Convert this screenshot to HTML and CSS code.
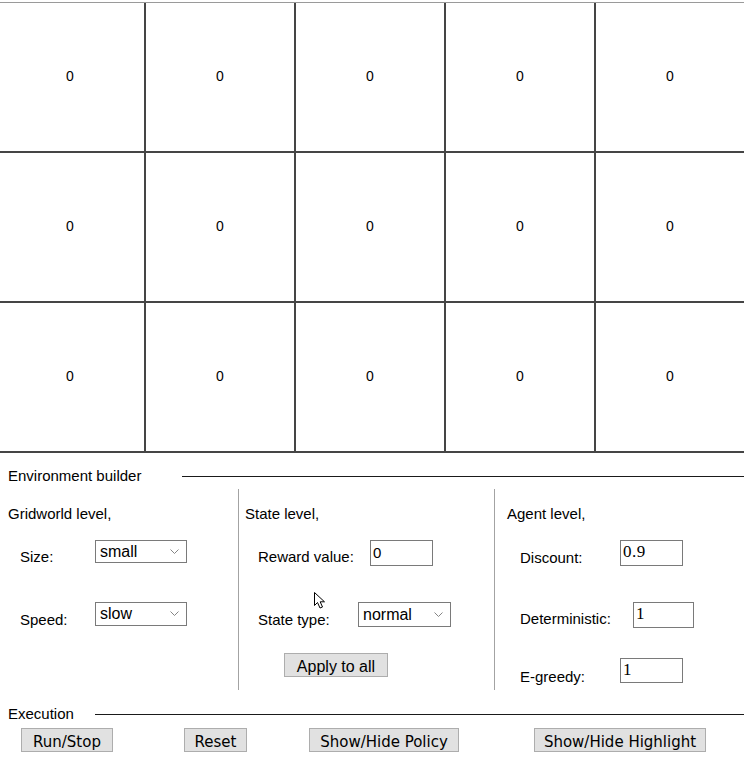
FILE: index.html
```html
<!DOCTYPE html>
<html>
<head>
<meta charset="utf-8">
<link rel="stylesheet" href="styles.css">
</head>
<body>
<div class="world">
  <div class="grid">
    <div class="cell">0</div><div class="cell">0</div><div class="cell">0</div><div class="cell">0</div><div class="cell">0</div>
    <div class="cell">0</div><div class="cell">0</div><div class="cell">0</div><div class="cell">0</div><div class="cell">0</div>
    <div class="cell">0</div><div class="cell">0</div><div class="cell">0</div><div class="cell">0</div><div class="cell">0</div>
  </div>
</div>

<div class="section-head env-head">
  <span class="section-title">Environment builder</span>
  <span class="rule rule-env"></span>
</div>

<div class="builder">
  <div class="col col-grid">
    <div class="col-title">Gridworld level,</div>
    <div class="row r1 h23">
      <label class="lbl w75 mt8">Size:</label>
      <span class="sel w92 h23"><span class="sel-text">small</span><svg class="chev" width="9" height="5" viewBox="0 0 9 5"><path d="M0.5 0.5 L4.5 4.5 L8.5 0.5" fill="none" stroke="#858585" stroke-width="1"/></svg></span>
    </div>
    <div class="row r2-grid h24">
      <label class="lbl w75 mt9">Speed:</label>
      <span class="sel w92 h24"><span class="sel-text">slow</span><svg class="chev" width="9" height="5" viewBox="0 0 9 5"><path d="M0.5 0.5 L4.5 4.5 L8.5 0.5" fill="none" stroke="#858585" stroke-width="1"/></svg></span>
    </div>
  </div>

  <div class="col col-state">
    <div class="col-title">State level,</div>
    <div class="row r1 h26">
      <label class="lbl w112 mt8">Reward value:</label>
      <span class="inp w63 h26 sans">0</span>
    </div>
    <div class="row r2 h25">
      <label class="lbl w100 mt9">State type:</label>
      <span class="sel w93 h25"><span class="sel-text">normal</span><svg class="chev" width="9" height="5" viewBox="0 0 9 5"><path d="M0.5 0.5 L4.5 4.5 L8.5 0.5" fill="none" stroke="#858585" stroke-width="1"/></svg></span>
    </div>
    <button class="btn apply">Apply to all</button>
  </div>

  <div class="col col-agent">
    <div class="col-title">Agent level,</div>
    <div class="row r1 h26">
      <label class="lbl w100 mt9">Discount:</label>
      <span class="inp w63 h26 serif">0.9</span>
    </div>
    <div class="row r2 h26">
      <label class="lbl w113 mt8">Deterministic:</label>
      <span class="inp w61 h26 serif">1</span>
    </div>
    <div class="row r3 h25">
      <label class="lbl w100 mt10">E-greedy:</label>
      <span class="inp w63 h25 serif">1</span>
    </div>
  </div>
</div>

<div class="section-head exec-head">
  <span class="section-title">Execution</span>
  <span class="rule rule-exec"></span>
</div>

<div class="exec">
  <button class="btn b-run">Run/Stop</button>
  <button class="btn b-reset">Reset</button>
  <button class="btn b-policy">Show/Hide Policy</button>
  <button class="btn b-high">Show/Hide Highlight</button>
</div>

<svg class="cursor" width="14" height="20" viewBox="0 0 14 20">
  <path d="M1.5 1.5 L1.5 14.5 L4.5 11.5 L7 17 L9.5 16 L7.2 10.8 L11.5 10.8 Z" fill="#fff" stroke="#000" stroke-width="1" stroke-linejoin="miter"/>
</svg>
</body>
</html>
```

FILE: styles.css
```css
html, body {
  margin: 0;
  padding: 0;
  background: #fff;
}
body {
  width: 744px;
  height: 759px;
  overflow: hidden;
  position: relative;
  font-family: "Liberation Sans", Arial, sans-serif;
  font-size: 15px;
  color: #000;
}

/* ---------- grid world ---------- */
.world {
  width: 744px;
  height: 453px;
  overflow: hidden;
  padding-top: 2px;
  box-sizing: border-box;
}
.grid {
  display: grid;
  grid-template-columns: repeat(5, 150px);
  grid-template-rows: repeat(3, 150px);
  width: 750px;
  margin-left: -4px;
  border-top: 1px solid #9a9a9a;
}
.cell {
  box-sizing: border-box;
  border-right: 2px solid #454545;
  border-bottom: 2px solid #454545;
  display: flex;
  align-items: center;
  justify-content: center;
  font-size: 14px;
  font-family: "Liberation Sans", Arial, sans-serif;
  padding-bottom: 2px;
}

/* ---------- section headers ---------- */
.section-head {
  display: flex;
  align-items: center;
  height: 22px;
  padding-left: 8px;
}
.env-head {
  margin-top: 12px;
}
.exec-head {
  margin-top: 13px;
}
.section-title {
  white-space: nowrap;
  line-height: 18px;
}
.rule {
  flex: 1;
  height: 1px;
  background: #1a1a1a;
}
.rule-env {
  margin-left: 41px;
}
.rule-exec {
  margin-left: 21px;
}

/* ---------- builder columns ---------- */
.builder {
  display: flex;
  height: 201px;
  margin-top: 2px;
}
.col {
  box-sizing: border-box;
  height: 201px;
  padding-top: 16px;
}
.col-grid {
  width: 238px;
  padding-left: 8px;
}
.col-state {
  width: 256px;
  border-left: 1px solid #a3a3a3;
  padding-left: 6px;
}
.col-agent {
  flex: 1;
  border-left: 1px solid #a3a3a3;
  padding-left: 12px;
}
.col-title {
  line-height: 18px;
  height: 18px;
  white-space: nowrap;
}
.row {
  display: flex;
  align-items: flex-start;
  padding-left: 12px;
}
.col-state .row, .col-agent .row {
  padding-left: 13px;
}
.r1 { margin-top: 17px; }
.r2-grid { margin-top: 39px; }
.r2 { margin-top: 36px; }
.r3 { margin-top: 30px; }

.h23 { height: 23px; }
.h24 { height: 24px; }
.h25 { height: 25px; }
.h26 { height: 26px; }

.lbl {
  line-height: 18px;
  white-space: nowrap;
}
.mt8 { margin-top: 8px; }
.mt9 { margin-top: 9px; }
.mt10 { margin-top: 10px; }
.w75 { width: 75px; }
.w100 { width: 100px; }
.w112 { width: 112px; }
.w113 { width: 113px; }

.w61 { width: 61px; }
.w63 { width: 63px; }
.w92 { width: 92px; }
.w93 { width: 93px; }

/* select look-alike */
.sel {
  position: relative;
  box-sizing: border-box;
  border: 1px solid #7a7a7a;
  background: #fff;
  display: flex;
  align-items: center;
  padding-left: 4px;
  font-size: 16px;
  line-height: 18px;
}
.chev {
  position: absolute;
  right: 7px;
  top: 50%;
  margin-top: -3px;
}

/* input look-alike */
.inp {
  box-sizing: border-box;
  border: 1px solid #7a7a7a;
  background: #fff;
  display: flex;
  align-items: center;
  padding-left: 2px;
  padding-bottom: 2px;
}
.inp.sans {
  font-family: "Liberation Sans", Arial, sans-serif;
  font-size: 15px;
}
.inp.serif {
  font-family: "Liberation Serif", "Times New Roman", serif;
  font-size: 17px;
  letter-spacing: 0.5px;
}

/* buttons */
.btn {
  box-sizing: border-box;
  height: 24px;
  padding: 0;
  margin: 0;
  background: #e1e1e1;
  border: 1px solid #adadad;
  border-radius: 0;
  font-family: "DejaVu Sans", Verdana, sans-serif;
  font-size: 15px;
  color: #000;
  text-align: center;
  white-space: nowrap;
  line-height: 24px;
  padding-top: 1px;
}
.apply {
  display: block;
  width: 104px;
  margin-top: 26px;
  margin-left: 39px;
  font-family: "Liberation Sans", Arial, sans-serif;
  font-size: 16px;
}

.exec {
  display: flex;
  margin-top: 3px;
}
.b-run { width: 92px; margin-left: 21px; }
.b-reset { width: 63px; margin-left: 71px; }
.b-policy { width: 150px; margin-left: 62px; }
.b-high { width: 172px; margin-left: 75px; }

/* mouse pointer captured in the screenshot */
.cursor {
  position: absolute;
  left: 313px;
  top: 591px;
}
```
